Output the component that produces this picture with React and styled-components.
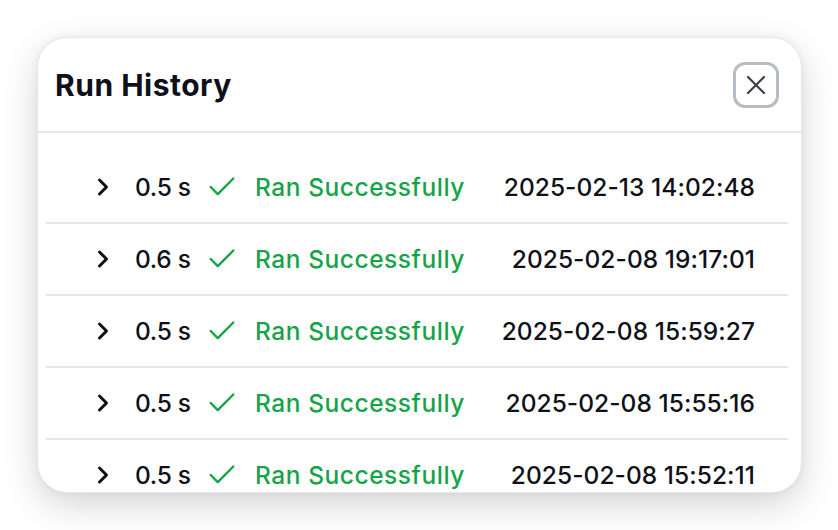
import React from 'react';
import styled, { createGlobalStyle } from 'styled-components';
import { ChevronRight, Check, X } from 'lucide-react';

const GlobalStyle = createGlobalStyle`
  html, body {
    margin: 0;
    padding: 0;
    background: #ffffff;
    font-family: Inter, "Noto Sans", sans-serif;
  }
`;

const Page = styled.div`
  width: 838px;
  height: 530px;
  padding: 37px 36px 0 37px;
  box-sizing: border-box;
  overflow: hidden;
`;

const Card = styled.div`
  width: 765px;
  height: 456px;
  background: #ffffff;
  border-radius: 30px;
  border: 1px solid #e6e6ee;
  box-sizing: border-box;
  box-shadow: 0 12px 36px rgba(0, 0, 0, 0.17), 0 0 6px rgba(0, 0, 0, 0.05);
  display: flex;
  flex-direction: column;
  overflow: hidden;
`;

const Header = styled.div`
  flex: none;
  height: 93px;
  display: flex;
  align-items: center;
  justify-content: space-between;
  padding: 0 22px 0 17px;
  border-bottom: 2px solid #e5e7eb;
`;

const Title = styled.h1`
  margin: 0;
  font-size: 30px;
  font-weight: 700;
  color: #0f111a;
  letter-spacing: 0.5px;
`;

const CloseButton = styled.button`
  width: 46px;
  height: 46px;
  border: 3px solid #b7bcc4;
  border-radius: 12px;
  background: #ffffff;
  display: flex;
  align-items: center;
  justify-content: center;
  color: #3b3f4a;
  padding: 0;
  cursor: pointer;
`;

const List = styled.div`
  flex: 1;
  overflow: hidden;
  padding: 19px 13px 0 8px;
`;

const Row = styled.div`
  height: 70px;
  display: flex;
  align-items: center;
  padding: 0 33px 0 43px;
  border-bottom: 2px solid #e5e7eb;
  font-size: 24.5px;
  font-weight: 500;
  color: #0f111a;
`;

const Chevron = styled.span`
  display: flex;
  width: 46px;
  color: #0f111a;
`;

const Duration = styled.span`
  width: 70px;
  letter-spacing: -0.3px;
`;

const CheckMark = styled.span`
  display: flex;
  width: 50px;
  color: #16a34a;
`;

const Status = styled.span`
  color: #16a34a;
  letter-spacing: 0.55px;
`;

const Timestamp = styled.span`
  margin-left: auto;
  letter-spacing: 0.05px;
`;

const runs = [
  { duration: '0.5 s', time: '2025-02-13 14:02:48' },
  { duration: '0.6 s', time: '2025-02-08 19:17:01' },
  { duration: '0.5 s', time: '2025-02-08 15:59:27' },
  { duration: '0.5 s', time: '2025-02-08 15:55:16' },
  { duration: '0.5 s', time: '2025-02-08 15:52:11' },
];

export default function App() {
  return (
    <>
      <GlobalStyle />
      <Page>
        <Card>
          <Header>
            <Title>Run History</Title>
            <CloseButton aria-label="Close">
              <X size={32} strokeWidth={1.6} />
            </CloseButton>
          </Header>
          <List>
            {runs.map((run, i) => (
              <Row key={i}>
                <Chevron>
                  <ChevronRight size={28} strokeWidth={2.6} />
                </Chevron>
                <Duration>{run.duration}</Duration>
                <CheckMark>
                  <Check size={34} strokeWidth={1.7} />
                </CheckMark>
                <Status>Ran Successfully</Status>
                <Timestamp>{run.time}</Timestamp>
              </Row>
            ))}
          </List>
        </Card>
      </Page>
    </>
  );
}
